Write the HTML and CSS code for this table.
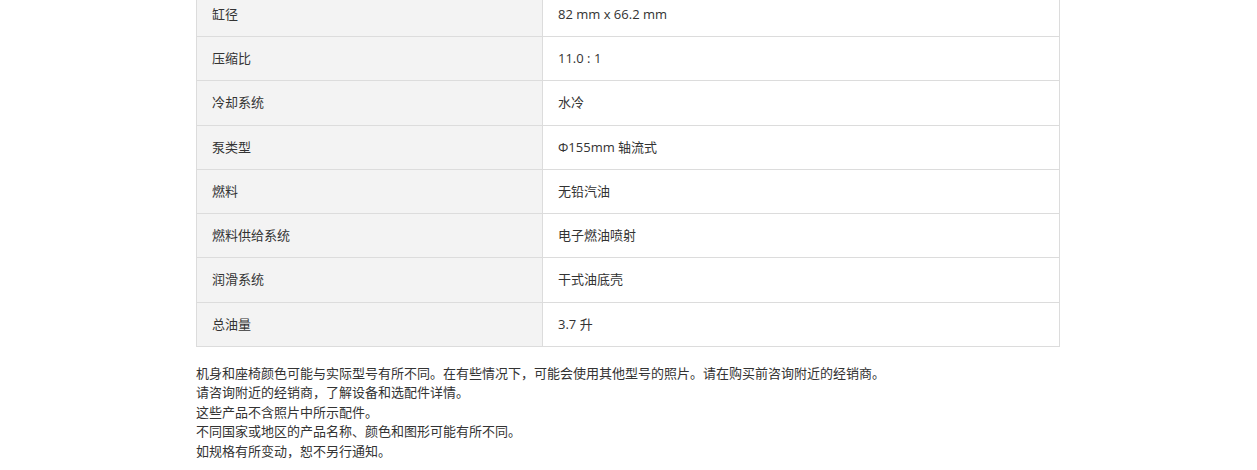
FILE: index.html
```html
<!DOCTYPE html>
<html lang="zh-CN">
<head>
    <meta charset="UTF-8">
    <meta name="viewport" content="width=device-width, initial-scale=1.0">
    <title>规格</title>
    <link rel="stylesheet" href="styles.css">
</head>
<body>
    <div class="spec-wrap">
        <table class="spec-table">
            <colgroup>
                <col class="col-name">
                <col>
            </colgroup>
            <tbody>
                <tr>
                    <th>缸径</th>
                    <td>82 mm x 66.2 mm</td>
                </tr>
                <tr>
                    <th>压缩比</th>
                    <td>11.0 : 1</td>
                </tr>
                <tr>
                    <th>冷却系统</th>
                    <td>水冷</td>
                </tr>
                <tr>
                    <th>泵类型</th>
                    <td>Φ155mm 轴流式</td>
                </tr>
                <tr>
                    <th>燃料</th>
                    <td>无铅汽油</td>
                </tr>
                <tr>
                    <th>燃料供给系统</th>
                    <td>电子燃油喷射</td>
                </tr>
                <tr>
                    <th>润滑系统</th>
                    <td>干式油底壳</td>
                </tr>
                <tr>
                    <th>总油量</th>
                    <td>3.7 升</td>
                </tr>
            </tbody>
        </table>

        <!-- notes under the spec table -->
        <div class="notes">
            <p>机身和座椅颜色可能与实际型号有所不同。在有些情况下，可能会使用其他型号的照片。请在购买前咨询附近的经销商。</p>
            <p>请咨询附近的经销商，了解设备和选配件详情。</p>
            <p>这些产品不含照片中所示配件。</p>
            <p>不同国家或地区的产品名称、颜色和图形可能有所不同。</p>
            <p>如规格有所变动，恕不另行通知。</p>
        </div>
    </div>
</body>
</html>
```

FILE: styles.css
```css
body {
    margin: 0;
    padding-right: 1px;
    background-color: #fff;
    font-family: "Open Sans", "Noto Sans CJK SC", sans-serif;
    font-size: 13px;
    color: #333;
}

.spec-wrap {
    width: 864px;
    margin: -8.3px auto 0;
}

.spec-table {
    width: 100%;
    border-collapse: collapse;
    table-layout: fixed;
}

.spec-table .col-name {
    width: 346px;
}

.spec-table th,
.spec-table td {
    border: 1px solid #dcdcdc;
    padding: 12px 15px;
    line-height: 19.3px;
    height: 19.3px;
    text-align: left;
    font-weight: normal;
    vertical-align: middle;
}

.spec-table th {
    background-color: #f3f3f3;
}

.spec-table td {
    background-color: #fff;
}

.notes {
    margin-top: 17px;
}

.notes p {
    margin: 0;
    line-height: 19.4px;
}
```
